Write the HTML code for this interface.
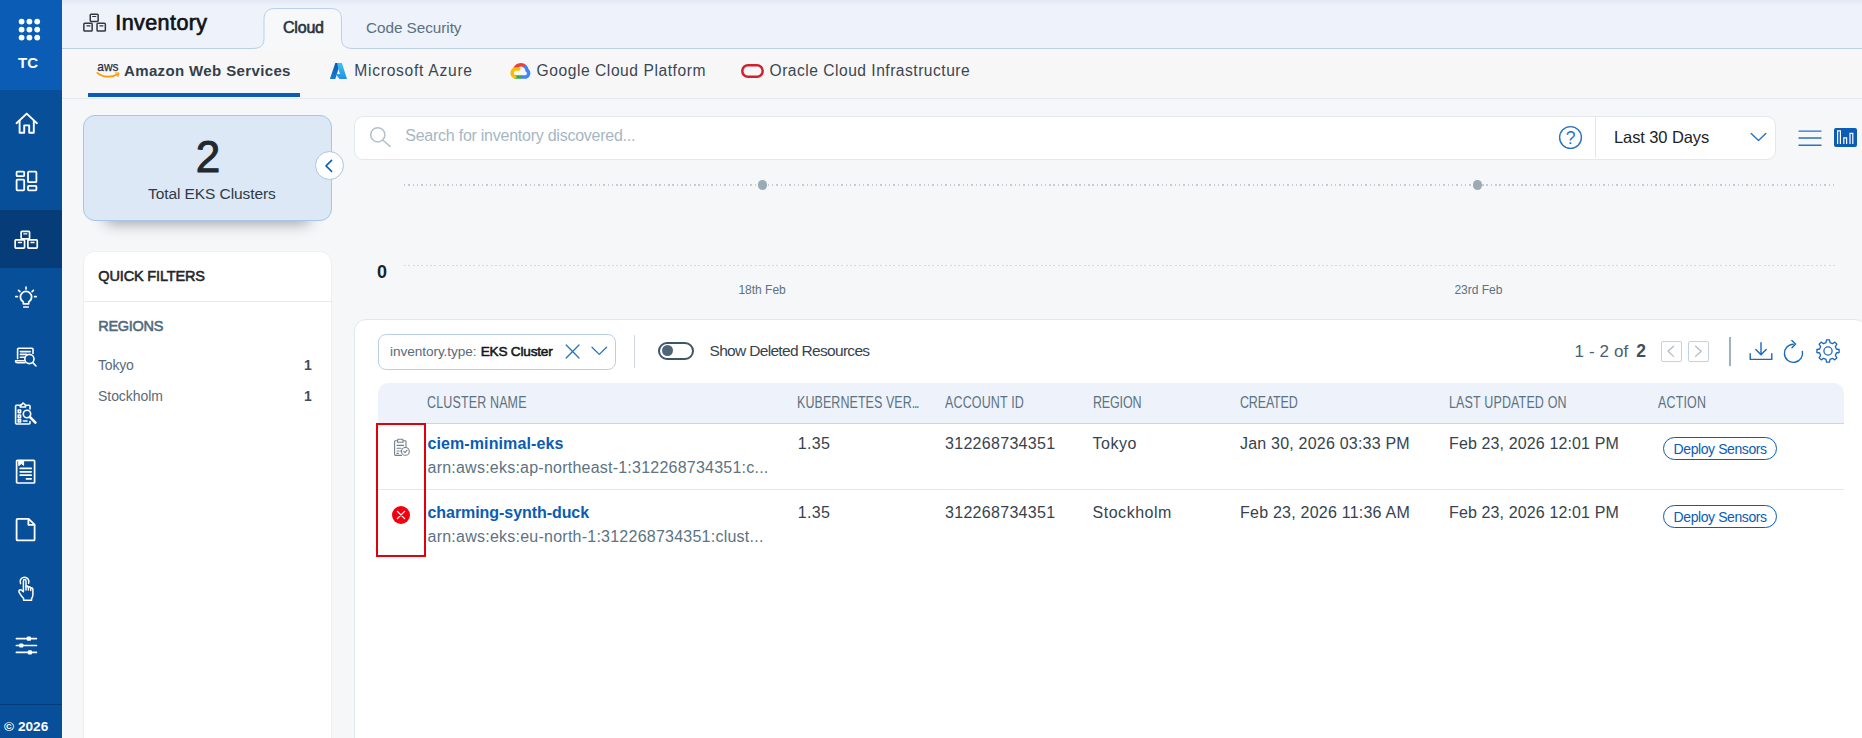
<!DOCTYPE html>
<html lang="en">
<head>
<meta charset="utf-8">
<title>Inventory</title>
<style>
*{box-sizing:border-box;margin:0;padding:0}
html,body{width:1862px;height:738px;overflow:hidden}
body{font-family:"Liberation Sans",sans-serif;background:#f6f7f9;color:#2c3a45;position:relative}
.abs{position:absolute}
.t{position:absolute;white-space:nowrap;line-height:1}
/* sidebar */
#side{position:absolute;left:0;top:0;width:62px;height:738px;background:#074f99}
#side .top{position:absolute;left:0;top:0;width:62px;height:90px;background:#0a5cb5}
#side .act{position:absolute;left:0;top:210px;width:62px;height:58px;background:#063d78}
#side svg{position:absolute;overflow:visible}
#side .foot{position:absolute;left:0;top:704px;width:62px;height:34px;border-top:1px solid #063d78}
/* header */
#hdr{position:absolute;left:62px;top:0;width:1800px;height:49px;background:linear-gradient(#e3eaf5 0,#eef2fa 6px,#eef2fa 100%);border-bottom:1px solid #b9d0ea}
#prov{position:absolute;left:62px;top:49px;width:1800px;height:50px;background:#f7f7f8;border-bottom:1px solid #e6e9ee}
.th{position:absolute;top:394.500px;white-space:nowrap;line-height:1;font-size:16px;color:#5b7282;transform:scaleX(0.780);transform-origin:0 0;letter-spacing:0.2px}
.td{position:absolute;white-space:nowrap;line-height:1;font-size:16px;color:#36434e;letter-spacing:-0.1px}
.td.lnk{font-weight:bold;color:#0a5cb5;letter-spacing:-0.35px}
.td.sub{color:#5c7383;letter-spacing:-0.1px}
.td.num{letter-spacing:0.3px}
.btn{position:absolute;left:1663px;width:114px;height:22.500px;border:1px solid #0a5cb5;border-radius:12px;color:#0a5cb5;font-size:14px;line-height:1;text-align:center;white-space:nowrap}
.btn span{position:absolute;left:9.600px;top:3.800px;letter-spacing:-0.41px}
</style>
</head>
<body>

<!-- ============ SIDEBAR ============ -->
<div id="side">
  <div class="top"></div>
  <div class="act"></div>
  <div class="foot"></div>
  <!-- app grid -->
  <svg style="left:17px;top:17px" width="25" height="25" viewBox="0 0 25 25" fill="#fff">
    <circle cx="4.6" cy="4.6" r="2.9"/><circle cx="12.4" cy="4.6" r="2.9"/><circle cx="20.2" cy="4.6" r="2.9"/>
    <circle cx="4.6" cy="12.6" r="2.9"/><circle cx="12.4" cy="12.6" r="2.9"/><circle cx="20.2" cy="12.6" r="2.9"/>
    <circle cx="4.6" cy="20.6" r="2.9"/><circle cx="12.4" cy="20.6" r="2.9"/><circle cx="20.2" cy="20.6" r="2.9"/>
  </svg>
  <div class="t" style="left:18px;top:54.600px;font-size:15px;font-weight:bold;color:#fff">TC</div>
  <!-- home -->
  <svg style="left:15px;top:112px" width="24" height="23" viewBox="0 0 24 23" fill="none" stroke="#fff" stroke-width="1.9" stroke-linejoin="round" stroke-linecap="round">
    <path d="M1.5 11.2 L11.7 1.6 L21.9 11.2"/><path d="M4.6 9 V20.7 H9.2 V13.4 H14.2 V20.7 H18.8 V9"/>
  </svg>
  <!-- dashboard -->
  <svg style="left:15px;top:170px" width="24" height="23" viewBox="0 0 24 23" fill="none" stroke="#fff" stroke-width="1.8" stroke-linejoin="round">
    <rect x="1.6" y="1.6" width="7.6" height="4.6" rx="0.8"/><rect x="1.6" y="9.6" width="7.6" height="10.8" rx="0.8"/>
    <rect x="13" y="1.6" width="8.4" height="10.6" rx="0.8"/><rect x="13" y="15.8" width="8.4" height="4.6" rx="0.8"/>
  </svg>
  <!-- inventory (active) -->
  <svg style="left:14px;top:230px" width="25" height="20" viewBox="0 0 25 20" fill="none" stroke="#fff" stroke-width="1.700" stroke-linejoin="round" stroke-linecap="round">
    <rect x="7.150" y="1.350" width="8.400" height="7.500" rx="0.800"/><rect x="1.150" y="9.850" width="9.400" height="8.300" rx="0.800"/><rect x="13.850" y="9.850" width="9.400" height="8.300" rx="0.800"/>
    <path d="M9.800 3.800 H12.900 M4.300 12.500 H7.400 M17 12.500 H20.100" stroke-width="1.300"/>
  </svg>
  <!-- bulb -->
  <svg style="left:14px;top:286px" width="24" height="25" viewBox="0 0 24 25" fill="none" stroke="#fff" stroke-width="1.7" stroke-linecap="round" stroke-linejoin="round">
    <path d="M9.3 17.8 V16 C7.4 14.8 6.4 13 6.4 11 A5.6 5.6 0 0 1 17.6 11 C17.6 13 16.6 14.800 14.7 16 V17.8 Z"/>
    <path d="M9.8 21 H14.2 M12 1.2 V3 M4.6 4.4 L5.9 5.6 M19.4 4.4 L18.1 5.6 M1.8 10.6 H3.4 M20.6 10.6 H22.2"/>
  </svg>
  <!-- search list -->
  <svg style="left:14px;top:347px" width="24" height="21" viewBox="0 0 24 21" fill="none" stroke="#fff" stroke-width="1.6" stroke-linecap="round" stroke-linejoin="round">
    <path d="M3.6 11.6 V2.2 Q3.6 1.2 4.6 1.2 H18 Q19 1.2 19 2.2 V6.4"/><path d="M10.4 13.8 H1.6 Q1.4 15.8 3.4 15.8 H11"/>
    <path d="M6.4 4.6 H16.2 M6.4 7.4 H12.6 M6.4 10.2 H10.6"/>
    <circle cx="15.4" cy="12" r="4.6"/><path d="M18.8 15.6 L22 19"/>
  </svg>
  <!-- clipboard search -->
  <svg style="left:14px;top:401px" width="24" height="25" viewBox="0 0 24 25" fill="none" stroke="#fff" stroke-width="1.6" stroke-linecap="round" stroke-linejoin="round">
    <path d="M7 4.2 H2.6 Q1.6 4.2 1.6 5.2 V22 Q1.6 23 2.6 23 H15 Q16 23 16 22 V20.6 M12.6 4.2 H15 Q16 4.2 16 5.2 V8"/>
    <path d="M6.2 6 V4.4 L8 3.4 Q8.8 0.8 10.6 3.4 L11.6 4.4 V6 Z"/>
    <rect x="4.2" y="9" width="2.4" height="2.6"/><rect x="4.2" y="14" width="2.4" height="2.6"/><rect x="4.2" y="18.6" width="2.4" height="2.4"/>
    <path d="M9.4 20 H13"/>
    <circle cx="13" cy="13" r="3.7"/><path d="M15.8 15.9 L21.4 21.6" stroke-width="2.6"/>
  </svg>
  <!-- report -->
  <svg style="left:15px;top:459px" width="22" height="26" viewBox="0 0 22 26" fill="none" stroke="#fff" stroke-width="1.7" stroke-linejoin="round" stroke-linecap="round">
    <rect x="1.6" y="1.4" width="18" height="22.6" rx="0.8"/>
    <path d="M4 1.6 H8.6 V6.4 L6.3 4.6 L4 6.4 Z" fill="#fff" stroke-width="1"/>
    <path d="M5.2 9.4 H16.2 M5.2 12.8 H16.2 M5.2 16.2 H16.2 M11.4 19.8 H16.2"/>
  </svg>
  <!-- document -->
  <svg style="left:15px;top:517px" width="22" height="26" viewBox="0 0 22 26" fill="none" stroke="#fff" stroke-width="1.8" stroke-linejoin="round" stroke-linecap="round">
    <path d="M2.6 1.8 H13.6 L19.6 7.6 V22.4 Q19.6 23.4 18.6 23.4 H2.6 Q1.6 23.4 1.6 22.4 V2.8 Q1.6 1.8 2.6 1.8 Z"/><path d="M13.4 2.2 V7.8 H19.2"/>
  </svg>
  <!-- hand tap -->
  <svg style="left:17px;top:575px" width="18" height="27" viewBox="0 0 18 27" fill="none" stroke="#fff" stroke-width="1.5" stroke-linejoin="round" stroke-linecap="round">
    <path d="M3.6 8.6 A4.4 4.4 0 1 1 11.6 8.2"/>
    <path d="M6.4 16.6 V6.2 Q6.4 4.6 7.7 4.6 Q9 4.6 9 6.2 V11.4 Q10.4 10.6 11.3 12 Q12.6 11.4 13.6 12.8 Q15.9 12.4 15.9 15 V19.6 Q15.9 22 14.6 23.4 V25.2 H6.6 V23.6 Q4 20.8 1.9 16.8 Q1.6 15.2 3 14.8 Q4.4 14.6 6.4 16.6 Z"/>
    <path d="M9 11.6 V15 M11.4 12.2 V15 M13.7 13 V15.4"/>
  </svg>
  <!-- sliders -->
  <svg style="left:15px;top:635px" width="23" height="21" viewBox="0 0 23 21" fill="none" stroke="#fff" stroke-width="1.7" stroke-linecap="round">
    <path d="M1.4 3.6 H21.4 M1.4 10.5 H21.4 M1.4 17.4 H21.4"/>
    <g fill="#fff" stroke="none"><rect x="11.8" y="1.5" width="4.2" height="4.2" rx="1"/><rect x="4.2" y="8.4" width="4.2" height="4.2" rx="1"/><rect x="12.8" y="15.3" width="4.2" height="4.2" rx="1"/></g>
  </svg>
  <div class="t" style="left:4px;top:720px;font-size:13.6px;font-weight:bold;color:#fff;letter-spacing:0.05px">© 2026</div>
</div>

<!-- ============ HEADER ============ -->
<div id="hdr"></div>
<div id="prov"></div>
<!-- cloud tab shape -->
<svg class="abs" style="left:250px;top:6px;overflow:visible" width="110" height="44" viewBox="0 0 110 44">
  <path d="M2 42.5 C10 42.5 14 40 14 32.5 V13.5 C14 6 18 2.5 25 2.5 H80.500 C88 2.500 91.500 6 91.500 13.500 V32.500 C91.500 40 95.500 42.500 103.500 42.500 V44 H2 Z" fill="#f7f8fa" stroke="none"/>
  <path d="M2 42.5 C10 42.5 14 40 14 32.5 V13.5 C14 6 18 2.5 25 2.5 H80.500 C88 2.500 91.500 6 91.500 13.500 V32.500 C91.500 40 95.500 42.500 103.500 42.500" fill="none" stroke="#b9d0ea" stroke-width="1"/>
</svg>
<!-- inventory title icon -->
<svg class="abs" style="left:82px;top:13px;overflow:visible" width="26" height="20" viewBox="0 0 26 20" fill="none" stroke="#33383e" stroke-width="1.500" stroke-linejoin="round" stroke-linecap="round">
  <rect x="8.250" y="1.150" width="7.900" height="7.300" rx="0.900"/><rect x="1.850" y="10.350" width="8.300" height="7.700" rx="0.900"/><rect x="15.050" y="10.350" width="8.300" height="7.700" rx="0.900"/>
  <path d="M10.600 3.500 H13.800 M4.900 12.800 H8 M17.900 12.800 H21" stroke-width="1.200"/>
</svg>
<div class="t" id="ttl" style="left:115.300px;top:13px;font-size:21.500px;color:#111317;-webkit-text-stroke:0.7px #111317;letter-spacing:0.42px">Inventory</div>
<div class="t" id="tcloud" style="left:283px;top:19.700px;font-size:16px;color:#2a3440;-webkit-text-stroke:0.6px #2a3440;letter-spacing:-0.2px">Cloud</div>
<div class="t" id="tcode" style="left:366px;top:19.700px;font-size:15.300px;color:#5b7080;letter-spacing:-0.05px">Code Security</div>

<!-- provider tabs -->
<svg class="abs" style="left:96px;top:63px;overflow:visible" width="24" height="16" viewBox="0 0 24 16">
  <text x="1.300" y="8.100" font-family="Liberation Sans, sans-serif" font-size="13.500" fill="#252f3d" stroke="#252f3d" stroke-width="0.250" textLength="21.200" lengthAdjust="spacingAndGlyphs">aws</text>
  <path d="M1.300 9.800 C7 14.600 15.500 14.800 21.800 11.200" fill="none" stroke="#f90" stroke-width="1.700" stroke-linecap="round"/>
  <path d="M19.400 10 L22.800 10 L21.800 13.400" fill="none" stroke="#f90" stroke-width="1.200" stroke-linecap="round" stroke-linejoin="round"/>
</svg>
<div class="t" id="paws" style="left:124px;top:62.700px;font-size:15px;font-weight:bold;color:#333f4b;letter-spacing:0.37px">Amazon Web Services</div>
<div class="abs" style="left:88px;top:93px;width:212px;height:4px;background:#0a5cb5"></div>

<svg class="abs" style="left:329px;top:62px;overflow:visible" width="19" height="18" viewBox="0 0 19 18">
  <defs><linearGradient id="azl" x1="0" y1="0" x2="0" y2="1"><stop offset="0" stop-color="#0f58a8"/><stop offset="1" stop-color="#1a7ad6"/></linearGradient>
  <linearGradient id="azr" x1="0" y1="0" x2="0" y2="1"><stop offset="0" stop-color="#3cc0f5"/><stop offset="1" stop-color="#2490e4"/></linearGradient></defs>
  <path d="M6.300 1.100 H11.300 L6.300 17 H0.900 Z" fill="url(#azl)"/>
  <path d="M8.100 1.100 H12.900 L18 17 H10.600 L6.300 12 H11 L9.200 6.600 Z" fill="url(#azr)"/>
</svg>
<div class="t" id="paz" style="left:354.300px;top:62.700px;font-size:15.600px;color:#3a4753;letter-spacing:0.73px">Microsoft Azure</div>

<svg class="abs" style="left:509.800px;top:62px;overflow:visible" width="22" height="18" viewBox="0 0 22 18">
  <path d="M5 6.600 A6.300 6.300 0 0 1 15.200 4.600" fill="none" stroke="#ea4335" stroke-width="3.500"/>
  <path d="M14.600 3.800 A6.300 6.300 0 0 1 17 8.200 A3.900 3.900 0 0 1 16.200 15 H10.800" fill="none" stroke="#4285f4" stroke-width="3.500"/>
  <path d="M11.200 15 H5.600 L4.200 14.400" fill="none" stroke="#34a853" stroke-width="3.500"/>
  <path d="M4.800 14.800 A4.100 4.100 0 0 1 5.600 6.900 H8.800" fill="none" stroke="#fbbc05" stroke-width="3.500" stroke-linecap="round"/>
</svg>
<div class="t" id="pgc" style="left:536.500px;top:62.700px;font-size:15.600px;color:#3a4753;letter-spacing:0.56px">Google Cloud Platform</div>

<svg class="abs" style="left:741px;top:64px;overflow:visible" width="23" height="14" viewBox="0 0 23 14">
  <rect x="1.300" y="1.300" width="20.400" height="11.400" rx="5.700" fill="none" stroke="#d0202e" stroke-width="2.500"/>
</svg>
<div class="t" id="por" style="left:769.500px;top:62.700px;font-size:15.600px;color:#3a4753;letter-spacing:0.5px">Oracle Cloud Infrastructure</div>

<!-- ============ CONTENT ============ -->
<div id="content">
<!-- stat card -->
<div class="abs" style="left:83px;top:115px;width:249px;height:106px;background:#dce8f5;border:1px solid #a9c5e6;border-radius:12px;box-shadow:0 25px 14px -23px rgba(20,30,40,0.42)"></div>
<div class="t" id="big2" style="left:195.800px;top:135.200px;font-size:44px;color:#22282e;-webkit-text-stroke:1px #22282e">2</div>
<div class="t" id="tek" style="left:148px;top:186.200px;font-size:15.500px;color:#2f3a44;letter-spacing:-0.08px">Total EKS Clusters</div>
<!-- collapse btn -->
<div class="abs" style="left:315px;top:151px;width:29px;height:29px;border-radius:50%;background:#fff;border:1px solid #a9c5e6"></div>
<svg class="abs" style="left:323px;top:159px" width="12" height="14" viewBox="0 0 12 14" fill="none" stroke="#0a5cb5" stroke-width="1.500" stroke-linecap="round" stroke-linejoin="round"><path d="M8.600 1.400 L3 6.900 L8.600 12.400"/></svg>

<!-- quick filters -->
<div class="abs" style="left:83px;top:250.500px;width:249px;height:500px;background:#fff;border:1px solid #eceff3;border-radius:12px"></div>
<div class="abs" style="left:84px;top:301px;width:248px;height:1px;background:#e6e9ee"></div>
<div class="t" id="qf" style="left:98.300px;top:268.800px;font-size:14.500px;color:#1e252c;-webkit-text-stroke:0.55px #1e252c;letter-spacing:-0.15px">QUICK FILTERS</div>
<div class="t" id="rg" style="left:98.300px;top:318.500px;font-size:14.500px;color:#516a7c;-webkit-text-stroke:0.55px #516a7c;letter-spacing:-0.3px">REGIONS</div>
<div class="t" id="tk" style="left:98px;top:358px;font-size:14px;color:#5a6b78;letter-spacing:-0.2px">Tokyo</div>
<div class="t" id="sk" style="left:98px;top:389px;font-size:14px;color:#5a6b78;letter-spacing:-0.05px">Stockholm</div>
<div class="t" style="left:304px;top:358px;font-size:14px;font-weight:bold;color:#3d5060">1</div>
<div class="t" style="left:304px;top:389px;font-size:14px;font-weight:bold;color:#3d5060">1</div>

<!-- search bar -->
<div class="abs" style="left:354px;top:115.500px;width:1422px;height:44px;background:#fff;border:1.500px solid #e4e8ed;border-radius:9px"></div>
<div class="abs" style="left:1595px;top:117px;width:1px;height:41px;background:#e4e8ed"></div>
<svg class="abs" style="left:369px;top:126.300px;overflow:visible" width="23" height="22" viewBox="0 0 23 22" fill="none" stroke="#b1c1cd" stroke-width="1.500" stroke-linecap="round"><circle cx="8.800" cy="8.800" r="7.100"/><path d="M14 14.200 L21 20.400"/></svg>
<div class="t" id="ph" style="left:405.300px;top:128.300px;font-size:16px;color:#a6b7c3;letter-spacing:-0.25px">Search for inventory discovered...</div>
<!-- help -->
<svg class="abs" style="left:1558px;top:125px;overflow:visible" width="25" height="25" viewBox="0 0 25 25" fill="none" stroke="#2a73c0" stroke-width="1.400" stroke-linecap="round"><circle cx="12.500" cy="12.500" r="10.900"/><text x="12.500" y="18.800" text-anchor="middle" font-family="Liberation Sans, sans-serif" font-size="17.500" fill="#2a73c0" stroke="none">?</text></svg>
<div class="t" id="l30" style="left:1614px;top:128.500px;font-size:16.500px;color:#1d2227;letter-spacing:-0.1px">Last 30 Days</div>
<svg class="abs" style="left:1750px;top:132px" width="17" height="10" viewBox="0 0 17 10" fill="none" stroke="#2a73c0" stroke-width="1.400" stroke-linecap="round" stroke-linejoin="round"><path d="M1.200 1.400 L8.500 8.400 L15.800 1.400"/></svg>
<!-- list / chart toggles -->
<svg class="abs" style="left:1798px;top:128px" width="24" height="20" viewBox="0 0 24 20" fill="none" stroke="#2a73c0" stroke-width="1.400" stroke-linecap="round"><path d="M1 3.100 H23 M1 10 H23 M1 17.300 H23"/></svg>
<div class="abs" style="left:1834px;top:127.500px;width:23px;height:19px;background:#0a5cb5;border-radius:2px"></div>
<svg class="abs" style="left:1834px;top:127px" width="23" height="20" viewBox="0 0 23 20" fill="none" stroke="#fff" stroke-width="1.200"><path d="M3.600 17 V3.900 H6.400 V17 M9.800 17 V10.800 H12.600 V17 M16 17 V6.400 H18.800 V17"/></svg>

<!-- chart -->
<div class="abs" style="left:403.800px;top:184.300px;width:1433px;height:1.400px;background:repeating-linear-gradient(90deg,#c3ccd3 0,#c3ccd3 1.400px,transparent 1.400px,transparent 4.330px)"></div>
<div class="abs" style="left:403.800px;top:264.800px;width:1433px;height:1.400px;background:repeating-linear-gradient(90deg,#d3dcdf 0,#d3dcdf 2px,transparent 2px,transparent 4.330px)"></div>
<div class="abs" style="left:757.600px;top:180.400px;width:9.200px;height:9.200px;border-radius:50%;background:#9aabb7"></div>
<div class="abs" style="left:1472.600px;top:180.400px;width:9.200px;height:9.200px;border-radius:50%;background:#9aabb7"></div>
<div class="t" style="left:377px;top:262.500px;font-size:18px;font-weight:bold;color:#1d2227">0</div>
<div class="t" id="d18" style="left:738.400px;top:283.800px;font-size:12px;color:#5b7282;letter-spacing:0px">18th Feb</div>
<div class="t" id="d23" style="left:1454.400px;top:283.800px;font-size:12px;color:#5b7282;letter-spacing:0px">23rd Feb</div>

<!-- table card -->
<div class="abs" style="left:354px;top:319px;width:1513px;height:440px;background:#fff;border:1px solid #e3e7ec;border-radius:12px"></div>
<!-- filter chip -->
<div class="abs" style="left:378px;top:334px;width:238px;height:35.500px;border:1px solid #b9d0ea;border-radius:8px;background:#fff"></div>
<div class="t" id="invt" style="left:390px;top:345px;font-size:13.600px;color:#5a6b78;letter-spacing:-0.06px">inventory.type:</div>
<div class="t" id="eksc" style="left:480.700px;top:345px;font-size:13.600px;color:#14181c;-webkit-text-stroke:0.55px #14181c;letter-spacing:-0.2px">EKS Cluster</div>
<svg class="abs" style="left:565px;top:344px" width="15" height="15" viewBox="0 0 15 15" fill="none" stroke="#2a73c0" stroke-width="1.300" stroke-linecap="round"><path d="M1.200 1 L14 14 M14 1 L1.200 14"/></svg>
<svg class="abs" style="left:591px;top:346px" width="17" height="10" viewBox="0 0 17 10" fill="none" stroke="#2a73c0" stroke-width="1.300" stroke-linecap="round" stroke-linejoin="round"><path d="M1 1.200 L8.300 8.400 L15.600 1.200"/></svg>
<div class="abs" style="left:634px;top:334.500px;width:1px;height:33px;background:#cfd6dc"></div>
<!-- toggle -->
<div class="abs" style="left:657.500px;top:342px;width:36px;height:17.500px;border:2px solid #3d5566;border-radius:9px;background:#fff"></div>
<div class="abs" style="left:661.800px;top:345.400px;width:10.800px;height:10.800px;border-radius:50%;background:#4f6678"></div>
<div class="t" id="sdr" style="left:709.500px;top:342.600px;font-size:15.500px;color:#36434e;letter-spacing:-0.68px">Show Deleted Resources</div>
<!-- pagination -->
<div class="t" id="pg1" style="left:1574.500px;top:343px;font-size:17px;color:#4a6070;letter-spacing:0.12px">1 - 2 of</div>
<div class="t" id="pg2" style="left:1636.300px;top:342.800px;font-size:17.500px;font-weight:bold;color:#3d5060">2</div>
<div class="abs" style="left:1661px;top:341px;width:20.500px;height:20.500px;border:1px solid #c3d2de;border-radius:2px"></div>
<div class="abs" style="left:1688px;top:341px;width:20.500px;height:20.500px;border:1px solid #c3d2de;border-radius:2px"></div>
<svg class="abs" style="left:1666px;top:345px" width="10" height="13" viewBox="0 0 10 13" fill="none" stroke="#aabbc8" stroke-width="1.200" stroke-linecap="round" stroke-linejoin="round"><path d="M7.600 1.200 L2 6.300 L7.600 11.400"/></svg>
<svg class="abs" style="left:1693px;top:345px" width="10" height="13" viewBox="0 0 10 13" fill="none" stroke="#aabbc8" stroke-width="1.200" stroke-linecap="round" stroke-linejoin="round"><path d="M2.600 1.200 L8.200 6.300 L2.600 11.400"/></svg>
<div class="abs" style="left:1729px;top:337px;width:2px;height:29px;background:#9db2c2"></div>
<!-- download -->
<svg class="abs" style="left:1749px;top:341px;overflow:visible" width="24" height="20" viewBox="0 0 24 20" fill="none" stroke="#1c68ba" stroke-width="1.400" stroke-linecap="round" stroke-linejoin="round"><path d="M1.200 12.600 V18.400 H22.800 V12.600"/><path d="M12 1.600 V13.600 M6.800 8.600 L12 13.800 L17.200 8.600"/></svg>
<!-- refresh -->
<svg class="abs" style="left:1783px;top:339px;overflow:visible" width="22" height="25" viewBox="0 0 22 25" fill="none" stroke="#1c68ba" stroke-width="1.400" stroke-linecap="round" stroke-linejoin="round"><path d="M10.200 5.200 A9.100 9.100 0 1 0 19.400 12.400"/><path d="M8.800 1.600 L12.600 5 L9 8.800"/></svg>
<!-- gear -->
<svg class="abs" style="left:1816px;top:339px;overflow:visible" width="24" height="24" viewBox="0 0 24 24" fill="none" stroke="#1c68ba" stroke-width="1.300" stroke-linejoin="round">
<path d="M9.99 3.64 L10.51 0.90 L13.49 0.90 L14.01 3.64 L16.49 4.67 L18.79 3.10 L20.90 5.21 L19.33 7.51 L20.36 9.99 L23.10 10.51 L23.10 13.49 L20.36 14.01 L19.33 16.49 L20.90 18.79 L18.79 20.90 L16.49 19.33 L14.01 20.36 L13.49 23.10 L10.51 23.10 L9.99 20.36 L7.51 19.33 L5.21 20.90 L3.10 18.79 L4.67 16.49 L3.64 14.01 L0.90 13.49 L0.90 10.51 L3.64 9.99 L4.67 7.51 L3.10 5.21 L5.21 3.10 L7.51 4.67 Z"/><circle cx="12" cy="12" r="4.100"/></svg>

<!-- table header -->
<div class="abs" style="left:378px;top:383px;width:1466px;height:40.500px;background:#eef2fa;border-bottom:1.500px solid #c6d8ec;border-radius:10px 10px 0 0"></div>
<div class="th" style="left:427px">CLUSTER NAME</div>
<div class="th" style="left:797px"><span style="letter-spacing:0.1px">KUBERNETES VER</span><span style="letter-spacing:-1.8px">...</span></div>
<div class="th" style="left:945px">ACCOUNT ID</div>
<div class="th" style="left:1092.500px;letter-spacing:-0.2px">REGION</div>
<div class="th" style="left:1240px;letter-spacing:-0.2px">CREATED</div>
<div class="th" style="left:1449px">LAST UPDATED ON</div>
<div class="th" style="left:1658px">ACTION</div>
<!-- rows -->
<div class="abs" style="left:378px;top:489px;width:1466px;height:1px;background:#e3e9ee"></div>
<div class="abs" style="left:376px;top:423px;width:50px;height:134px;border:2px solid #e2000b"></div>

<svg class="abs" style="left:392.800px;top:437.700px;overflow:visible" width="18" height="19" viewBox="0 0 18 19" fill="none" stroke="#72818c" stroke-width="1.100" stroke-linecap="round" stroke-linejoin="round">
  <path d="M4.400 2.800 H2.400 Q1.600 2.800 1.600 3.600 V16.600 Q1.600 17.400 2.400 17.400 H8.600 M10.200 2.800 H12.200 Q13 2.800 13 3.600 V9"/>
  <path d="M4.600 4.200 V2 Q4.600 1.200 5.400 1.200 H9.200 Q10 1.200 10 2 V4.200 Z"/>
  <path d="M4 7.400 H10.600 M4 10.200 H8 M4 13 H5.400 M4 15.400 H5.400 M6.800 13 H8"/>
  <circle cx="12.400" cy="13.400" r="3.900"/><path d="M10.700 13.400 L11.900 14.600 L14.100 12.200"/>
</svg>
<div class="td lnk" id="n1" style="left:427.500px;top:436.200px;letter-spacing:0.1px">ciem-minimal-eks</div>
<div class="td sub" id="a1" style="left:427.500px;top:460px;letter-spacing:0.23px">arn:aws:eks:ap-northeast-1:312268734351:c...</div>
<div class="td" style="left:797.800px;top:436.200px;letter-spacing:0.3px">1.35</div>
<div class="td num" style="left:945px;top:436.200px">312268734351</div>
<div class="td" id="r1" style="left:1092.500px;top:436.200px;letter-spacing:0.54px">Tokyo</div>
<div class="td dt" id="c1" style="left:1240px;top:436.200px;letter-spacing:0.21px">Jan 30, 2026 03:33 PM</div>
<div class="td dt" id="u1" style="left:1449px;top:436.200px;letter-spacing:0.13px">Feb 23, 2026 12:01 PM</div>
<div class="btn" style="top:437px"><span>Deploy Sensors</span></div>

<div class="abs" style="left:392px;top:506px;width:18px;height:18px;border-radius:50%;background:#f3000f"></div>
<svg class="abs" style="left:396px;top:510px" width="10" height="10" viewBox="0 0 10 10" fill="none" stroke="#fff" stroke-width="1.300" stroke-linecap="round"><path d="M1.400 1.400 L8.600 8.600 M8.600 1.400 L1.400 8.600"/></svg>
<div class="td lnk" id="n2" style="left:427.500px;top:504.500px;letter-spacing:-0.06px">charming-synth-duck</div>
<div class="td sub" id="a2" style="left:427.500px;top:528.500px;letter-spacing:0.24px">arn:aws:eks:eu-north-1:312268734351:clust...</div>
<div class="td" style="left:797.800px;top:504.500px;letter-spacing:0.3px">1.35</div>
<div class="td num" style="left:945px;top:504.500px">312268734351</div>
<div class="td" id="r2" style="left:1092.500px;top:504.500px;letter-spacing:0.53px">Stockholm</div>
<div class="td dt" id="c2" style="left:1240px;top:504.500px;letter-spacing:0.23px">Feb 23, 2026 11:36 AM</div>
<div class="td dt" id="u2" style="left:1449px;top:504.500px;letter-spacing:0.13px">Feb 23, 2026 12:01 PM</div>
<div class="btn" style="top:505px"><span>Deploy Sensors</span></div>
</div>

</body>
</html>
